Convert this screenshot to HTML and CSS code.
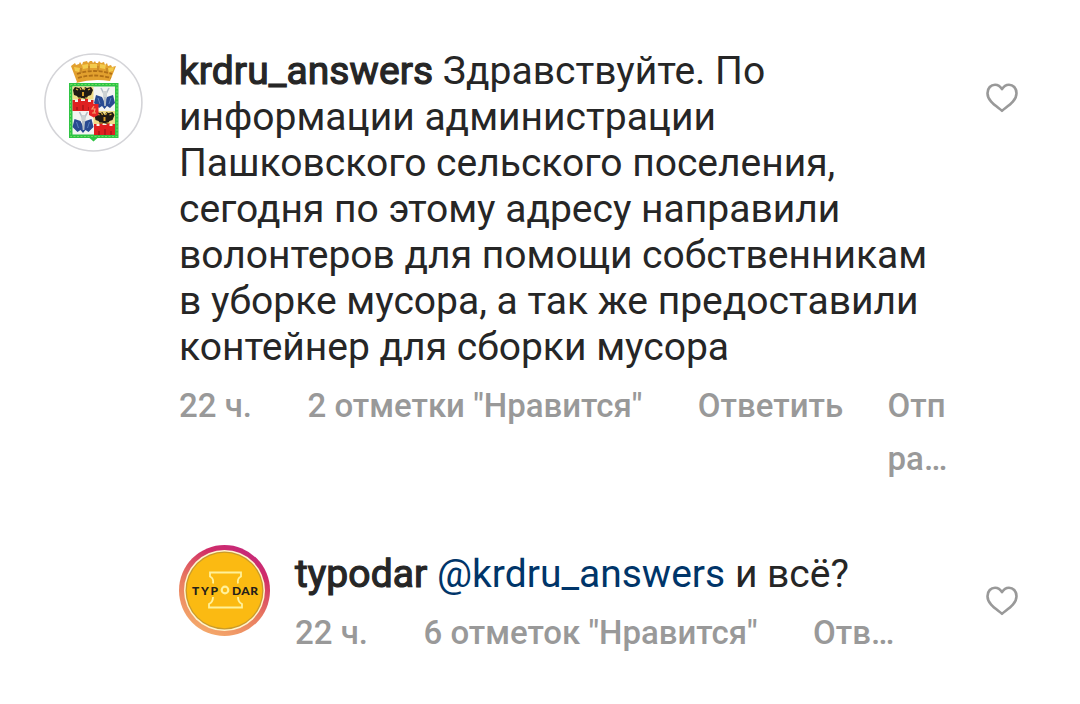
FILE: index.html
```
<!DOCTYPE html>
<html lang="ru">
<head>
    <meta charset="UTF-8">
    <meta name="viewport" content="width=device-width, initial-scale=1.0">
    <title>Комментарии</title>
    <link rel="stylesheet" href="styles.css">
</head>
<body>
    <div class="comments">
        <div class="comment">
            <svg class="avatar" viewBox="0 0 100 100">
                <circle cx="50.400" cy="50.500" r="48.500" fill="#fff" stroke="#d4d4d8" stroke-width="1.600"/>
                <!-- crown -->
                <path d="M34 30L28 14l4-3 1 2 3-1 1-2 2 3 1-3 4-1 1 2 2-2h2l1 2 2-2 1 2h2l1-2 2 2 3-1 1 3 2-2 1 3 3-1 1 2 4-1-6 15q-17-3-34 2z" fill="#e2a02e"/>
                <path d="M31 15l6 1-1 4-4-1zM39 13l6-1v4l-5 1zM47 12h7v4h-7zM57 12l6 1-1 4-5-1zM65 16l6-1-1 4-4 1z" fill="#f3cb4c"/>
                <path d="M34 22q17-6 35 0M35 26q16-5 33 0" fill="none" stroke="#b06f16" stroke-width="1.800" stroke-dasharray="4 1.5"/>
                <path d="M38 16v5M46 14v5M55 14v5M64 16v4" stroke="#b57a20" stroke-width="1"/>
                <!-- shield -->
                <path d="M26 31h49.500v55H54.500l-4 3.500-4-3.500H26z" fill="#2fc444"/>
                <path d="M27.500 32.500h46.500v52h-46.500z" fill="none" stroke="#6fdd60" stroke-width="1" stroke-dasharray="2 1.5"/>
                <path d="M29.500 34.500h42.500v48H29.500z" fill="#f4f4f2"/>
                <path d="M29.500 34.500h21v13h-21zM50.500 59h21.500v13h-21.500z" fill="#f0dc88"/>
                <path id="castle" d="M29.500 48h2.500v2h3v-3h3v2h4v-2h3v3h3v-2h2.500v11h-21z" fill="#df2020"/>
                <use href="#castle" x="21.500" y="24"/>
                <path d="M34 55v3M40 53v5M46 55v3M56 79v4M62 77v6M68 79v4" stroke="#a91519" stroke-width="1.500"/>
                <g id="eagle">
                    <path d="M30 38l2-3 4 1 2-1 2 3 2-3 2 1 4-1 2 3-2 5-3 1-2 3-4-1-3 1-2-3-3-1z" fill="#211b15"/>
                    <path d="M33 37l2 1M47 37l-2 1M37 36l1 2M42 36l-1 2M35 46h3M42 46h3" stroke="#e0b43a" stroke-width="1.200"/>
                    <path d="M39 40h2v4h-2z" fill="#d59b29"/>
                </g>
                <use href="#eagle" x="21.500" y="25"/>
                <g id="flags">
                    <path d="M53 43l6 2 2.500 5 2.500-5 6-2 2 8-5 5-3-2-2.500 3-2.500-3-3 2-5-5z" fill="#294a91"/>
                    <path d="M58 36l3 6 1 12 1-12 3-6" fill="none" stroke="#b4bec7" stroke-width="1.600"/>
                    <path d="M60 39h4v6h-4z" fill="#ccd1d3"/>
                    <path d="M55 46l2 6M68 46l-2 6" stroke="#587fbe" stroke-width="1"/>
                </g>
                <use href="#flags" x="-21.500" y="24"/>
                <path d="M46 52h9.500v11l-4.750 2.500-4.750-2.500z" fill="#e62425"/>
                <path d="M51 54l-2 3h3l-1 4M49 61h4" fill="none" stroke="#f2a06c" stroke-width="1.200"/>
            </svg>
            <div class="content">
                <div class="text"><span class="username">krdru_answers</span> Здравствуйте. По информации администрации Пашковского сельского поселения, сегодня по этому адресу направили волонтеров для помощи собственникам в уборке мусора, а так же предоставили контейнер для сборки мусора</div>
                <div class="meta">
                    <span>22 ч.</span>
                    <span>2 отметки "Нравится"</span>
                    <span>Ответить</span>
                    <span class="send">Отп<br>ра…</span>
                </div>
            </div>
            <svg class="heart" viewBox="0 0 34 32">
                <path d="M17 28.800C12 24.500 2.500 19.500 2.500 11.200C2.500 6 6 2.700 10 2.700C13.200 2.700 15.500 4.500 17 7.200C18.500 4.500 20.800 2.700 24 2.700C28 2.700 31.500 6 31.500 11.200C31.500 19.500 22 24.500 17 28.800z"/>
            </svg>
        </div>

        <div class="comment reply">
            <svg class="avatar" viewBox="0 0 92 92">
                <defs>
                    <linearGradient id="ring" x1="0.2" y1="1" x2="0.7" y2="0">
                        <stop offset="0" stop-color="#f6b06c"/>
                        <stop offset="0.45" stop-color="#e8795f"/>
                        <stop offset="0.8" stop-color="#d12d67"/>
                        <stop offset="1" stop-color="#c4287c"/>
                    </linearGradient>
                </defs>
                <circle cx="45.500" cy="45.500" r="45.500" fill="url(#ring)"/>
                <circle cx="45.500" cy="45.500" r="40.500" fill="#fff4cc"/>
                <circle cx="45.500" cy="45.500" r="39" fill="#c99b2c"/>
                <circle cx="45.500" cy="45.500" r="37.700" fill="#fbba12"/>
                <path d="M34 38.500q1-5-3-7v-4h31v4q-4 2-3 7M34 52q0 5-4 7v3.500h33v-3.500q-4-2-4-7" fill="none" stroke="#fff19a" stroke-width="1.800"/>
                <circle cx="46" cy="45" r="3.300" fill="none" stroke="#fff19a" stroke-width="2.200"/>
                <text class="logo" x="13" y="49.500" textLength="26">TYP</text>
                <text class="logo" x="53" y="49.500" textLength="26">DAR</text>
            </svg>
            <div class="content">
                <div class="text"><span class="username">typodar</span> <a class="mention">@krdru_answers</a> и всё?</div>
                <div class="meta">
                    <span>22 ч.</span>
                    <span>6 отметок "Нравится"</span>
                    <span>Отв…</span>
                </div>
            </div>
            <svg class="heart" viewBox="0 0 34 32">
                <path d="M17 28.800C12 24.500 2.500 19.500 2.500 11.200C2.500 6 6 2.700 10 2.700C13.200 2.700 15.500 4.500 17 7.200C18.500 4.500 20.800 2.700 24 2.700C28 2.700 31.500 6 31.500 11.200C31.500 19.500 22 24.500 17 28.800z"/>
            </svg>
        </div>
    </div>
</body>
</html>
```
FILE: styles.css
```
body {
    font-family: Roboto, sans-serif;
    margin: 0;
    background-color: #fff;
    color: #262626;
}
.comments {
    padding: 48px 61px 0 43px;
}
.comment {
    display: flex;
    align-items: flex-start;
}
.avatar {
    flex: none;
    width: 100px;
    height: 100px;
    margin: 4px 36px 0 0;
}
.content {
    flex: none;
    width: 765px;
}
.text {
    font-size: 39px;
    line-height: 46px;
}
.username {
    letter-spacing: 0.08px;
    -webkit-text-stroke: 1.2px #262626;
}
.mention {
    color: #003569;
}
.meta {
    display: flex;
    gap: 55.5px;
    margin-top: 9px;
    font-size: 33px;
    font-weight: 500;
    line-height: 53px;
    color: #999;
    white-space: nowrap;
}
.send {
    margin-left: -11px;
}
.heart {
    flex: none;
    width: 34px;
    height: 32px;
    margin: 34px 0 0 auto;
}
.heart path {
    fill: none;
    stroke: #999;
    stroke-width: 2.6;
    stroke-linejoin: round;
}
.reply {
    margin-top: 66px;
    padding-left: 136px;
}
.reply .avatar {
    width: 92px;
    height: 92px;
    margin: -6px 24px 0 0;
}
.reply .content {
    width: 640px;
}
.logo {
    font-family: Lato, sans-serif;
    font-size: 12px;
    font-weight: 900;
    fill: #24201a;
}
```
